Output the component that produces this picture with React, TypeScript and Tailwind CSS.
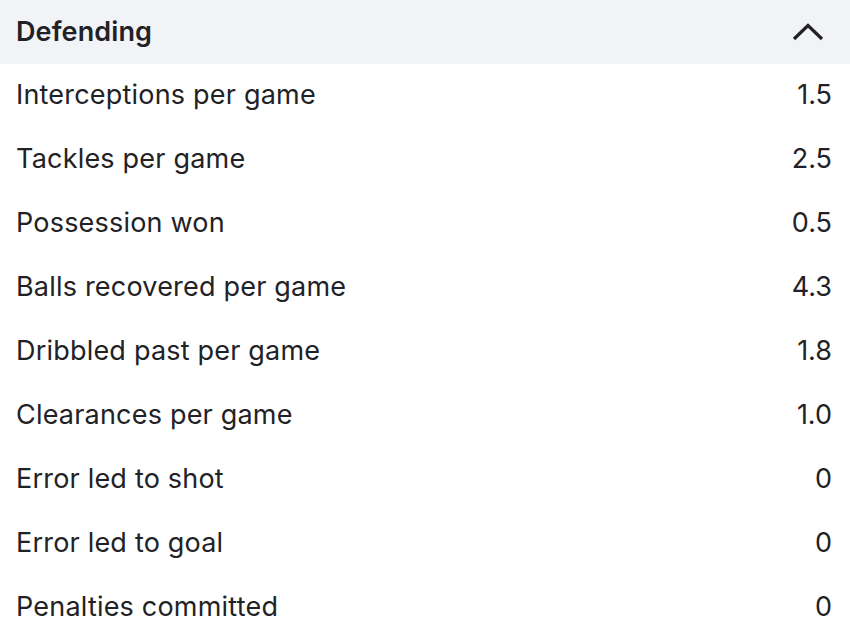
import React from "react";

const rows: [string, string][] = [
  ["Interceptions per game", "1.5"],
  ["Tackles per game", "2.5"],
  ["Possession won", "0.5"],
  ["Balls recovered per game", "4.3"],
  ["Dribbled past per game", "1.8"],
  ["Clearances per game", "1.0"],
  ["Error led to shot", "0"],
  ["Error led to goal", "0"],
  ["Penalties committed", "0"],
];

export default function App() {
  return (
    <div className="w-[850px] h-[630px] overflow-hidden bg-white text-[#222226]" style={{ fontFamily: "Inter, 'Noto Sans', sans-serif" }}>
      <div className="h-16 bg-[#f2f3f7] flex items-center justify-between pl-4 pr-[26px]">
        <span className="text-[27px] font-semibold tracking-[0.1px]">Defending</span>
        <svg width="32" height="20" viewBox="0 0 32 20" fill="none">
          <path d="M2 17 L16 3.5 L30 17" stroke="#222226" strokeWidth="3.2" />
        </svg>
      </div>
      {rows.map(([label, value]) => (
        <div key={label} className="h-16 flex items-center justify-between pl-4 pr-[18px] pb-[2px]">
          <span className="text-[27px] tracking-[0.2px]">{label}</span>
          <span className="text-[27px]">{value}</span>
        </div>
      ))}
    </div>
  );
}
